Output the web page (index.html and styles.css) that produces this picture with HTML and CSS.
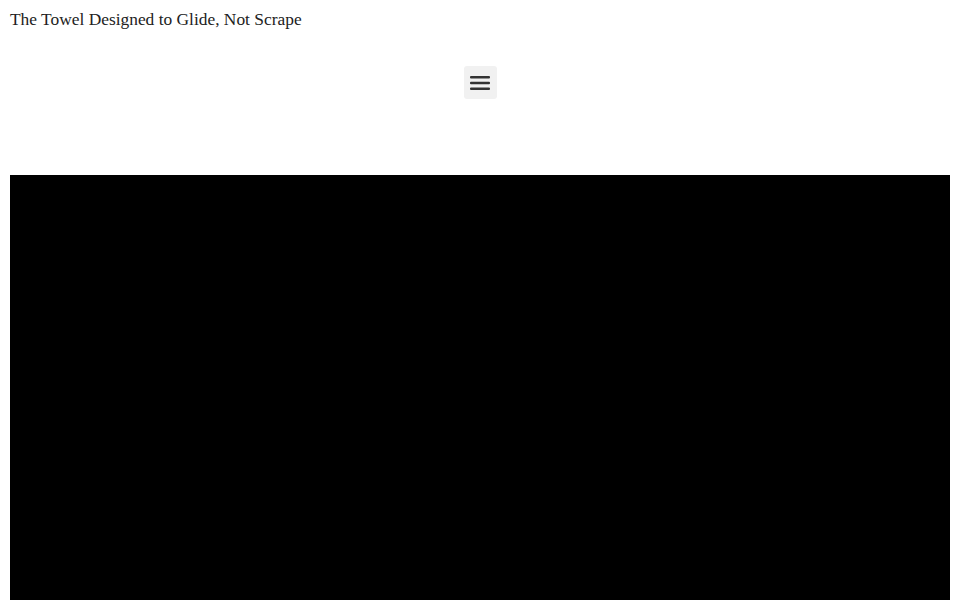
FILE: index.html
```html
<!DOCTYPE html>
<html>
<head>
<meta charset="utf-8">
<link rel="stylesheet" href="styles.css">
</head>
<body>
<header class="header">
  <p class="tagline">The Towel Designed to Glide, Not Scrape</p>
  <div class="nav">
    <button class="menu-toggle" aria-label="Menu">
      <svg width="20" height="16" viewBox="0 0 20 16"><rect x="0" y="1" width="20" height="2.6" rx="1" fill="#333"/><rect x="0" y="6.7" width="20" height="2.6" rx="1" fill="#333"/><rect x="0" y="12.4" width="20" height="2.6" rx="1" fill="#333"/></svg>
    </button>
  </div>
</header>
<section class="video"></section>
</body>
</html>
```
FILE: styles.css
```css
html, body { margin: 0; padding: 0; background: #fff; }
body { padding: 0 10px; }
.header { display: flex; flex-direction: column; }
.tagline {
  margin: 0;
  padding-top: 8px;
  font-family: "Liberation Serif", "Times New Roman", serif;
  font-size: 17.4px;
  line-height: 22px;
  color: #222;
}
.nav { display: flex; justify-content: center; padding-top: 36px; height: 145px; box-sizing: border-box; }
.menu-toggle {
  width: 33px; height: 33px;
  background: #f1f1f1;
  border: none; border-radius: 3px;
  display: flex; align-items: center; justify-content: center;
  padding: 0; cursor: pointer;
}
.video { background: #000; height: 425px; }
```
